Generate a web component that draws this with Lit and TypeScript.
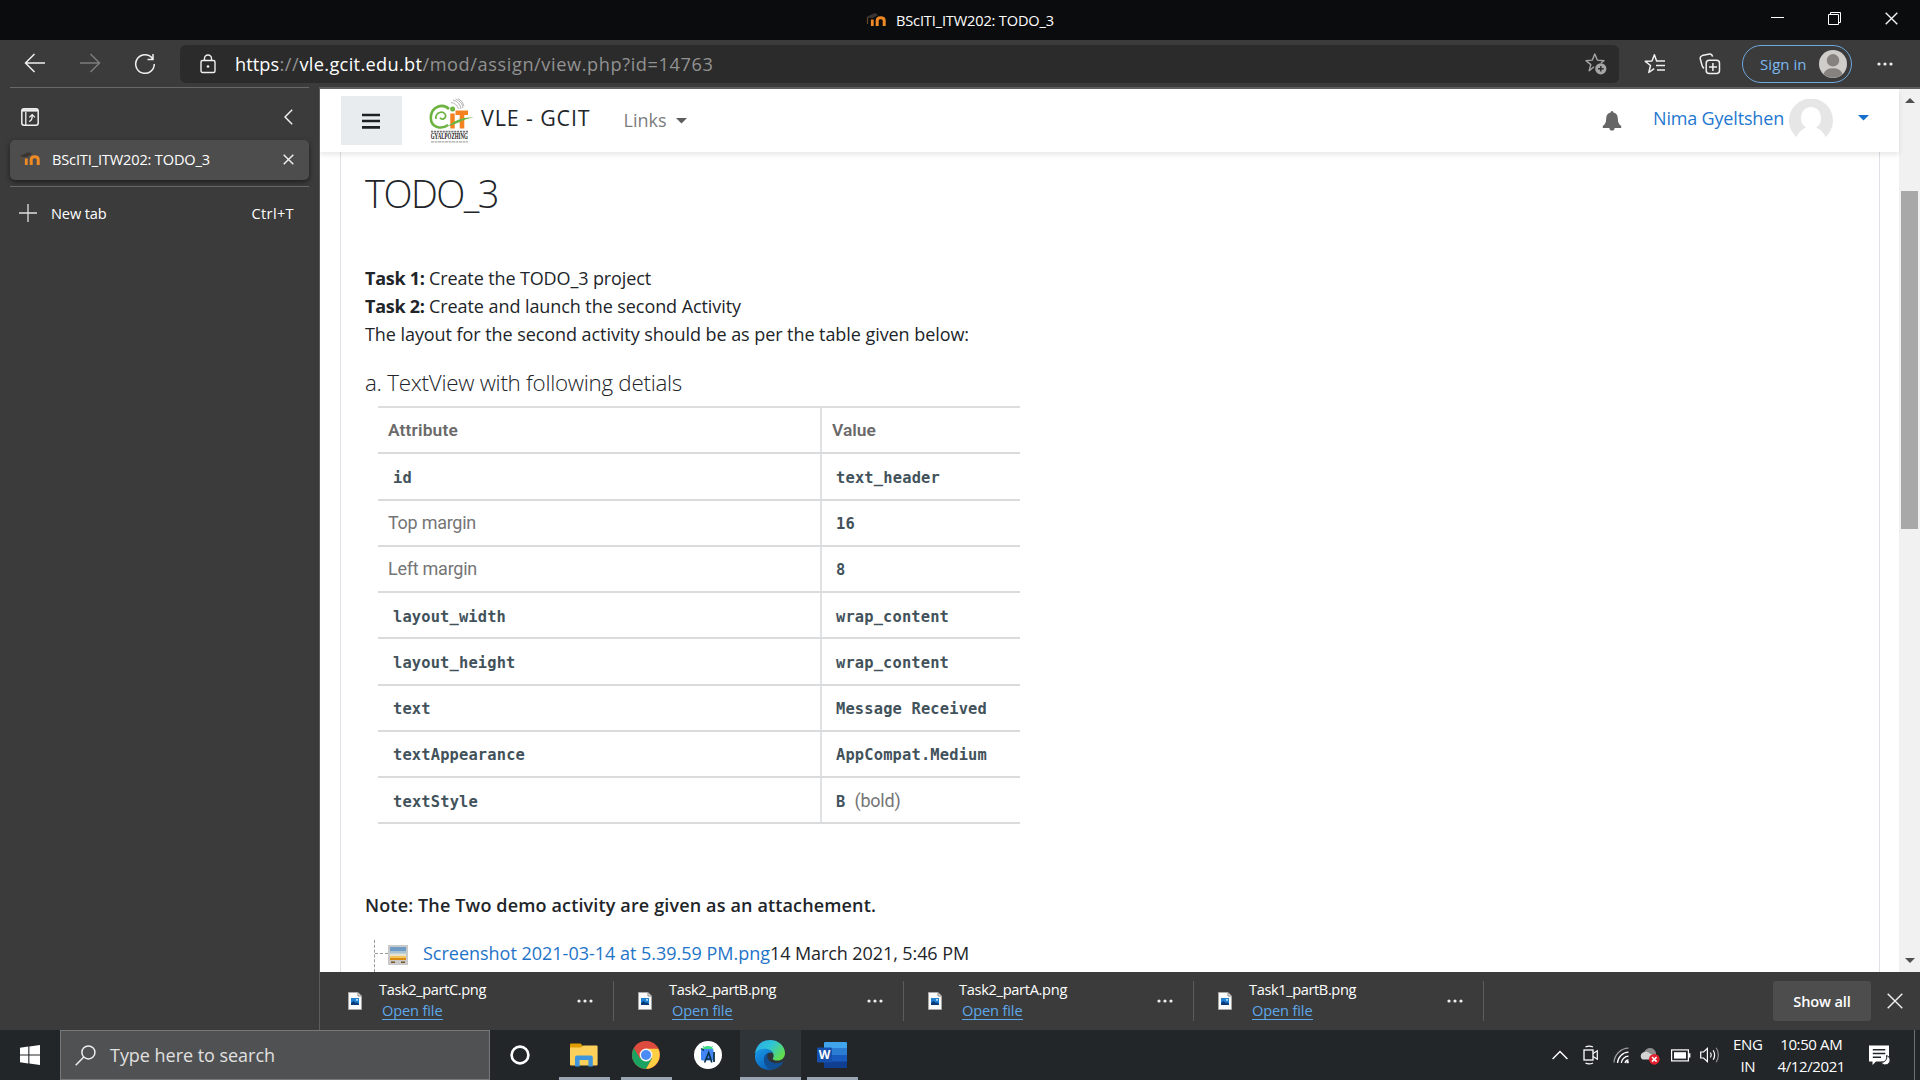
import { LitElement, html, css, svg } from "lit";
import { customElement, property } from "lit/decorators.js";

/** Single-line label whose tracking is adjusted so that it fills a set width. */
@customElement("fit-text")
class FitText extends LitElement {
  @property({ type: Number }) w = 0;
  static styles = css`
    :host { display: inline-block; white-space: pre; }
  `;
  updated() {
    this.style.letterSpacing = "0px";
    const n = (this.textContent || "").length;
    const natural = this.getBoundingClientRect().width;
    if (n && this.w) this.style.letterSpacing = `${(this.w - natural) / n}px`;
  }
  render() {
    return html`<slot></slot>`;
  }
}

const fit = (text: string, w: number, cls = "") =>
  html`<fit-text class=${cls} w=${w}>${text}</fit-text>`;

const icon = (w: number, h: number, body: unknown, cls = "") =>
  html`<svg class="ic ${cls}" width=${w} height=${h} viewBox="0 0 ${w} ${h}" fill="none">${body}</svg>`;

const moodle = icon(20, 16, svg`
  <path d="M0 5 L9 1 L12 3 L7 6 L2 6 Z" fill="#3a3532"/><path d="M1.5 6V12" stroke="#6b4a2c" stroke-width="1.2"/>
  <path d="M6.3 14V7.5" stroke="#f08a24" stroke-width="2.8"/>
  <path d="M11.2 14V8.6C11.2 4.8 18.2 4.8 18.2 8.6V14" stroke="#f08a24" stroke-width="3"/>`);

const dots = icon(18, 6, svg`<circle cx="3" cy="3" r="1.6" fill="#eee"/><circle cx="9" cy="3" r="1.6" fill="#eee"/><circle cx="15" cy="3" r="1.6" fill="#eee"/>`);

const cross = (s: number) => icon(s, s, svg`<path d="M.7 .7L${s - 0.7} ${s - 0.7}M${s - 0.7} .7L.7 ${s - 0.7}" stroke="#f2f2f2" stroke-width="1.4"/>`);

const rows: Array<[string, string, string, number, number]> = [
  ["mono", "id", "text_header", 19, 104],
  ["", "Top margin", "16", 88, 19],
  ["", "Left margin", "8", 89, 9.5],
  ["mono", "layout_width", "wrap_content", 113, 113],
  ["mono", "layout_height", "wrap_content", 122.5, 113],
  ["mono", "text", "Message Received", 37.7, 151],
  ["mono", "textAppearance", "AppCompat.Medium", 132, 151],
  ["mono", "textStyle", "B", 85, 9.5],
];

const files: Array<[string, number]> = [
  ["Task2_partC.png", 107],
  ["Task2_partB.png", 107],
  ["Task2_partA.png", 108],
  ["Task1_partB.png", 107],
];

@customElement("app-root")
class AppRoot extends LitElement {
  static styles = css`
    :host { display: block; width: 1920px; height: 1080px; overflow: hidden;
      font-family: "Open Sans", "Noto Sans", sans-serif; font-size: 14.6px; color: #fff; background: #3b3b3b; }
    * { box-sizing: border-box; }
    svg { display: block; flex: none; }
    .grow { flex: 1; }
    .title { height: 40px; background: #0b0c0e; display: flex; align-items: center; padding: 0 22px 4px 866px; }
    .title .ic { margin-top: 4px; }
    .title fit-text { margin: 3px 0 0 10px; }
    .title .win { display: flex; gap: 44px; align-items: center; margin-left: auto; }
    .title .win .ic { margin-top: 0; }
    .tools { height: 47px; display: flex; align-items: center; padding: 0 26px 0 24px; }
    .tools .nav { display: flex; gap: 33px; width: 156px; }
    .addr { width: 1440px; height: 38px; background: #2b2b2b; border-radius: 6px; display: flex; align-items: center; padding: 0 11px 0 20px; }
    .url { font-size: 18.2px; margin-left: 19px; display: flex; color: #929292; }
    .url b { font-weight: 400; color: #fff; }
    .fav { margin-left: 25px; }
    .coll { margin-left: 33px; }
    .pill { width: 110px; height: 38px; margin-left: 21px; border: 1.5px solid #6fa9dd; border-radius: 20px; display: flex; align-items: center; justify-content: space-between; padding: 0 4px 0 17px; color: #7cb8f0; font-size: 15px; }
    .tools > .more { margin-left: 24px; }
    .mid { display: flex; height: 943px; }
    .side { width: 320px; border-right: 1px solid #5c5c5c; padding: 0 10px; }
    .side .top { border-top: 1px solid #686868; height: 53px; display: flex; justify-content: space-between; align-items: center; padding: 6px 16px 0 11px; }
    .tab { height: 40px; background: #4d4d4d; border-radius: 5px; box-shadow: 0 2px 5px rgba(0,0,0,.5); display: flex; align-items: center; padding: 0 15px 2px 10px; }
    .tab fit-text { margin: 0 auto 0 12px; }
    .new { border-top: 1px solid #686868; margin-top: 6px; height: 52px; display: flex; align-items: center; padding: 0 15px 0 9px; }
    .new .n { margin: 0 auto 0 14px; }
    .main { width: 1600px; display: flex; flex-direction: column; }
    .view { height: 885px; background: #fff; border-top: 2px solid #5e5e5e; display: flex; color: #212529; overflow: hidden; }
    .page { width: 1579px; font-size: 18px; display: flex; flex-direction: column; }
    .head { height: 63px; flex: none; box-shadow: 0 3px 5px rgba(0,0,0,.09); display: flex; align-items: center; padding: 0 30px 0 21px; position: relative; }
    .burger { width: 61px; height: 49px; background: #e9ecef; display: flex; align-items: center; justify-content: center; padding-right: 1px; }
    .logo { margin: -2px 0 0 27px; overflow: visible; }
    .brand { font-size: 21.4px; margin: -6px 0 0 7px; }
    .links { color: #7c7c7c; margin: -1px 9px 0 33px; }
    .user { color: #1f78cf; margin: -6px 5px 0 31px; }
    .head .c2 { margin: -6px 0 0 25px; }
    .card { margin: 0 20px 0 20px; width: 1540px; flex: 1; border-left: 1px solid #dee2e6; border-right: 1px solid #dee2e6; padding: 15px 0 0 24px; }
    .h1 { font-size: 38px; font-weight: 300; height: 52px; line-height: 52px; }
    .tasks { margin-top: 45px; height: 84px; line-height: 28px; }
    .tasks > div, .note, .h1, .h2 { display: flex; }
    .h2 { font-size: 22.4px; font-weight: 300; line-height: 32px; margin-top: 19px; height: 35px; }
    .tb { margin: 4px 0 0 13px; width: 642px; border-top: 2px solid #dcdddf; font-family: Roboto, sans-serif; font-size: 18px; color: #757575; }
    .row { height: 46.25px; border-bottom: 2px solid #d9dbdc; display: flex; }
    .a { width: 444px; border-right: 2px solid #e0e1e3; padding-left: 10px; display: flex; align-items: center; }
    .v { padding-left: 14px; display: flex; align-items: center; }
    .th .v { padding-left: 10px; }
    .th { font-weight: 600; color: #6a6a6a; font-size: 17.4px; }
    .mono { font-family: "DejaVu Sans Mono", monospace; font-weight: 700; font-size: 15.4px; color: #42525b; padding-top: 3px; }
    .a .mono { margin-left: 5px; }
    .bold { margin-left: 9px; }
    .note { font-weight: 600; margin-top: 67px; line-height: 28px; height: 49px; }
    .tree { display: flex; margin-left: 9px; height: 32px; border-left: 1px dashed #999; line-height: 26px; }
    .tree .br { width: 13px; height: 14px; border-bottom: 1px dashed #999; }
    .tree .ic { margin-top: 5px; }
    .tree .lk { color: #1f74c7; margin-left: 15px; }
    .bar { width: 21px; background: #f1f1f1; display: flex; flex-direction: column; align-items: center; padding: 9px 0 9px; }
    .thumb { width: 17px; height: 338px; background: #a8a8a8; margin-top: 88px; margin-bottom: auto; }
    .dl { height: 58px; display: flex; align-items: center; padding-right: 17px; }
    .file { width: 290px; height: 40px; border-right: 1px solid #5c5c5c; display: flex; align-items: center; padding: 0 19px 0 24px; }
    .dl .file:first-child { width: 294px; padding-left: 28px; }
    .file .names { display: flex; flex-direction: column; margin: -5px auto 0 17px; align-items: flex-start; line-height: 24px; }
    .open { color: #5ea8ea; margin-left: 3px; line-height: 18px; border-bottom: 1px solid #5ea8ea; }
    .all { width: 98px; height: 40px; background: #4d4d4d; border-radius: 3px; display: flex; align-items: center; justify-content: center; font-weight: 600; margin: 0 16px 0 auto; padding-bottom: 1px; }
    .task { height: 50px; background: #222629; display: flex; align-items: center; }
    .start { width: 60px; display: flex; justify-content: center; }
    .search { width: 430px; height: 50px; border: 1px solid #777879; background: #505152; display: flex; align-items: center; padding-left: 14px; font-size: 18px; color: #e0e0e0; }
    .search fit-text { margin-left: 14px; padding-bottom: 1px; }
    .app { width: 51px; height: 50px; margin-left: 11px; display: flex; justify-content: center; align-items: center; border-bottom: 3px solid #99a5b3; padding: 3px 2px 0 0; }
    .app.off { border-color: transparent; }
    .app.on { width: 61px; background: #2f3438; margin-left: 6px; }
    .app.on + .app { margin-left: 6px; }
    .tray { margin-left: auto; display: flex; align-items: center; font-size: 15px; padding-right: 5px; }
    .col { display: flex; flex-direction: column; align-items: center; line-height: 22px; padding-bottom: 1px; }
    .peek { width: 1px; height: 50px; background: #6d7073; margin-left: 24px; }
  `;

  render() {
    return html`
      <div class="title">
        ${moodle} ${fit("BScITI_ITW202: TODO_3", 158)}
        <div class="win">
          ${icon(13, 13, svg`<path d="M0 5.5H13" stroke="#fff"/>`)}
          ${icon(13, 13, svg`<path d="M.5 2.5H10.5V12.5H.5ZM2.5 2.5V.5H12.5V10.5H10.5" stroke="#fff"/>`)}
          ${cross(13)}
        </div>
      </div>

      <div class="tools">
        <div class="nav">
          ${icon(22, 20, svg`<path d="M21 10H2M10.5 1L1.5 10L10.5 19" stroke="#f0f0f0" stroke-width="1.5"/>`)}
          ${icon(22, 20, svg`<path d="M1 10H20M11.5 1L20.5 10L11.5 19" stroke="#7c7c7c" stroke-width="1.5"/>`)}
          ${icon(22, 22, svg`<path d="M18.5 5.5A9.3 9.3 0 1 0 20.3 11M19 1V6.5H13.5" stroke="#f0f0f0" stroke-width="1.5"/>`)}
        </div>
        <div class="addr">
          ${icon(16, 20, svg`<rect x="1" y="6.5" width="14" height="12" rx="1.5" stroke="#f0f0f0" stroke-width="1.4"/><path d="M4.5 6.5V4.5A3.5 3.5 0 0 1 11.5 4.5V6.5" stroke="#f0f0f0" stroke-width="1.4"/><circle cx="8" cy="12.5" r="1.3" fill="#f0f0f0"/>`)}
          <div class="url"><b>${fit("https", 44.5)}</b>${fit("://", 20)}<b>${fit("vle.gcit.edu.bt", 123)}</b>${fit("/mod/assign/view.php?id=14763", 291)}</div>
          <span class="grow"></span>
          ${icon(24, 24, svg`<path d="M10 14.8L5.2 18.7L6.8 12.6L2 8.6L8.3 8.1L10.8 2L13.3 8.1L20 8.7L17 11" stroke="#a5a5a5" stroke-width="1.4" stroke-linejoin="round"/><circle cx="16.8" cy="16.8" r="5.6" fill="#a5a5a5"/><path d="M16.8 14V19.6M14 16.8H19.6" stroke="#2b2b2b" stroke-width="1.4"/>`)}
        </div>
        ${icon(22, 22, svg`<path d="M13.5 8H12.6L10.4 1.8L8 8L1.3 8.3L6.5 12.5L4.8 19.5L10.2 15.6M12 8H21M12 12.6H21M13 17H21" stroke="#f0f0f0" stroke-width="1.5" stroke-linejoin="round"/>`, "fav")}
        ${icon(22, 22, svg`<rect x="7.2" y="7.2" width="13.3" height="13.3" rx="3" stroke="#f0f0f0" stroke-width="1.5"/><path d="M13.9 10V18M10 13.9H18M4.8 15.5L3.2 13L1.2 5.5Q1 3.3 3.2 2.6L10.5 1Q12.8 .8 13.6 3.6" stroke="#f0f0f0" stroke-width="1.5"/>`, "coll")}
        <div class="pill">
          ${fit("Sign in", 46.5)}
          ${icon(28, 28, svg`<circle cx="14" cy="14" r="14" fill="#cfcdca"/><circle cx="14" cy="10.3" r="6.2" fill="#85827f"/><path d="M4.5 24A9.8 7.5 0 0 1 23.5 24A14 14 0 0 1 4.5 24Z" fill="#85827f"/>`)}
        </div>
        <span class="more">${dots}</span>
      </div>

      <div class="mid">
        <div class="side">
          <div class="top">
            ${icon(18, 18, svg`<rect x=".8" y=".8" width="16.4" height="16.4" rx="2.2" stroke="#f0f0f0" stroke-width="1.5"/><path d="M1 2.4H17" stroke="#f0f0f0" stroke-width="2.4"/><path d="M4.8 4V17" stroke="#f0f0f0" stroke-width="1.3"/><path d="M8 13.5Q11.5 12.5 11.2 7M8.3 9.4L11.2 6.6L14 9.4" stroke="#f0f0f0" stroke-width="1.3"/>`)}
            ${icon(9, 16, svg`<path d="M8.2 .7L1 8L8.2 15.3" stroke="#f0f0f0" stroke-width="1.5"/>`)}
          </div>
          <div class="tab">${moodle} ${fit("BScITI_ITW202: TODO_3", 158)} ${cross(11)}</div>
          <div class="new">
            ${icon(18, 18, svg`<path d="M9 0V18M0 9H18" stroke="#e0e0e0" stroke-width="1.3"/>`)}
            ${fit("New tab", 55.5, "n")} ${fit("Ctrl+T", 42.5)}
          </div>
        </div>

        <div class="main">
          <div class="view">
            <div class="page">
              <div class="head">
                <div class="burger">${icon(18, 16, svg`<path d="M0 2H18M0 8H18M0 14.4H18" stroke="#1d2125" stroke-width="2.6"/>`)}</div>
                ${this.logo()}
                ${fit("VLE - GCIT", 109.5, "brand")}
                ${fit("Links", 43, "links")}
                ${icon(11, 6, svg`<path d="M0 0H11L5.5 5.6Z" fill="#5d5d5d"/>`)}
                <span class="grow"></span>
                ${icon(20, 22, svg`<path d="M10 1A1.5 1.5 0 0 1 11.4 2.6Q15.8 3.8 15.8 8.5Q15.8 14 19.2 16V18H12.6A2.6 2.6 0 0 1 7.4 18H.8V16Q4.2 14 4.2 8.5Q4.2 3.8 8.6 2.6A1.5 1.5 0 0 1 10 1Z" fill="#666"/>`)}
                ${fit("Nima Gyeltshen", 131, "user")}
                ${icon(44, 44, svg`<path d="M7.5 38A22 22 0 1 1 36.5 38Q34 31.5 27 28.5A10.5 10.5 0 0 0 31.8 18C31.8 4.5 12.2 4.5 12.2 18A10.5 10.5 0 0 0 17 28.5Q10 31.5 7.5 38Z" fill="#e6e6e6"/>`)}
                ${icon(11, 6, svg`<path d="M0 0H11L5.5 5.6Z" fill="#1670c9"/>`, "c2")}
              </div>
              <div class="card">
                <div class="h1">${fit("TODO_3", 133)}</div>
                <div class="tasks">
                  <div><b>${fit("Task 1: ", 64)}</b>${fit("Create the TODO_3 project", 222)}</div>
                  <div><b>${fit("Task 2: ", 64)}</b>${fit("Create and launch the second Activity", 312)}</div>
                  <div>${fit("The layout for the second activity should be as per the table given below:", 604)}</div>
                </div>
                <div class="h2">${fit("a. TextView with following detials", 317)}</div>
                <div class="tb">
                  <div class="row th"><div class="a">${fit("Attribute", 70)}</div><div class="v">${fit("Value", 44)}</div></div>
                  ${rows.map(([cls, a, v, aw, vw]) => html`
                    <div class="row">
                      <div class="a">${fit(a, aw, cls)}</div>
                      <div class="v">${fit(v, vw, "mono")}${v === "B" ? fit("(bold)", 46, "bold") : ""}</div>
                    </div>`)}
                </div>
                <div class="note">${fit("Note: The Two demo activity are given as an attachement.", 511)}</div>
                <div class="tree">
                  <div class="br"></div>
                  ${icon(20, 20, svg`<rect width="20" height="20" fill="#c9c9c9"/><rect x="2" y="2" width="16" height="5" fill="#6f9cc4"/><rect x="2" y="6" width="16" height="3" fill="#a9c3d6"/><rect x="2" y="8.5" width="16" height="3" fill="#e6e2d0"/><rect x="2" y="11" width="16" height="3" fill="#f3c55a"/><rect x="2" y="13" width="16" height="2" fill="#d98a10"/><path d="M3 17.3H7M13 17.3H17" stroke="#7a5a20" stroke-width="1.6"/>`)}
                  ${fit("Screenshot 2021-03-14 at 5.39.59 PM.png", 347, "lk")}${fit("14 March 2021, 5:46 PM", 199)}
                </div>
              </div>
            </div>
            <div class="bar">
              ${icon(10, 5, svg`<path d="M0 5L5 0L10 5Z" fill="#505050"/>`)}
              <div class="thumb"></div>
              ${icon(10, 5, svg`<path d="M0 0L5 5L10 0Z" fill="#505050"/>`)}
            </div>
          </div>
          <div class="dl">
            ${files.map(([f, w]) => html`
              <div class="file">
                ${icon(14, 18, svg`<path d="M.5 .5H10L13.5 4V17.5H.5Z" fill="#fafafa" stroke="#a8a8a8"/><path d="M10 .5V4H13.5" stroke="#888"/><rect x="3" y="6" width="8" height="7" fill="#1f80d2"/><path d="M3 13V11L5.5 9L8 11L9 10.2L11 12V13Z" fill="#0b3a78"/><circle cx="9" cy="7.8" r=".9" fill="#fff"/>`)}
                <div class="names">${fit(f, w)}${fit("Open file", 60.5, "open")}</div>
                ${dots}
              </div>`)}
            <div class="all">${fit("Show all", 57.5)}</div>
            ${cross(16)}
          </div>
        </div>
      </div>

      <div class="task">
        <div class="start">${icon(20, 20, svg`<path d="M0 2.8L8.3 1.6V9.4H0ZM9.4 1.4L20 0V9.4H9.4ZM0 10.5H8.3V18.4L0 17.2ZM9.4 10.5H20V20L9.4 18.6Z" fill="#fff"/>`)}</div>
        <div class="search">
          ${icon(21, 21, svg`<circle cx="13.4" cy="7.4" r="6.5" stroke="#eee" stroke-width="1.5"/><path d="M8.8 12L.7 20.2" stroke="#eee" stroke-width="1.5"/>`)}
          ${fit("Type here to search", 165)}
        </div>
        ${this.apps()}
        ${this.tray()}
      </div>`;
  }

  logo() {
    return html`<svg class="logo" width="45" height="46" viewBox="0 0 45 46" fill="none">
      <path d="M24 3Q31 5 32 12M26.5 2Q33.5 5 34 11M22 5.5Q27.5 6 29.5 12M29 1.5Q34 4 35 9" stroke="#b5b5b5" stroke-width="1"/>
      <path d="M20 12C14 6 2 9 1.8 21C2 31 13 32.5 19 28" stroke="#6cb33f" stroke-width="2.6"/>
      <path d="M7 22C6 15 15 13 16.5 18C17.5 22 12 23.5 11.2 20.5" stroke="#6cb33f" stroke-width="1.7"/>
      <path d="M23.5 16.5V31.5" stroke="#f58220" stroke-width="4.4"/>
      <circle cx="23.6" cy="12" r="2.5" fill="#6cb33f"/>
      <path d="M26.5 15.8H39M33 15.8V31.5" stroke="#f58220" stroke-width="4.6"/>
      <path d="M18 29C25 26 28 20 45 20.5C33 22 28 28 18 29Z" fill="#6cb33f"/>
      <path d="M2 34.6H39" stroke="#777" stroke-width="1.8" stroke-dasharray="2.2 .7"/>
      <text x="1.8" y="42.4" font-family="Liberation Serif, serif" font-weight="700" font-size="7.4" fill="#222" textLength="37" lengthAdjust="spacingAndGlyphs">GYALPOZHING</text>
      <path d="M2 44.9H39" stroke="#aaa" stroke-width="1.3" stroke-dasharray="3 .5"/>
    </svg>`;
  }

  apps() {
    return html`
      <div class="app off" style="margin-left:5px">${icon(20, 20, svg`<circle cx="10" cy="10" r="8.4" stroke="#fff" stroke-width="2.6"/>`)}</div>
      <div class="app" style="margin-left:13px">${icon(28, 24, svg`<path d="M0 1.5Q0 .5 1 .5H10.5L13.5 3.5V6H0Z" fill="#e09c00"/><path d="M0 4.5H11L13.5 2.5H26.5Q27.6 2.5 27.6 3.6V21.5Q27.6 22.5 26.5 22.5H1Q0 22.5 0 21.5Z" fill="#fdd05c"/><path d="M5 23.5V14.6Q5 12.5 7 12.5H20.8Q22.8 12.5 22.8 14.6V23.5H18.4V17H9.6V23.5Z" fill="#3f96dc"/>`)}</div>
      <div class="app">${icon(28, 28, svg`<circle cx="14" cy="14" r="14" fill="#dd4b3e"/><path d="M14 14L1.9 7A14 14 0 0 0 14 28L20 17.5Z" fill="#1aa260"/><path d="M14 28A14 14 0 0 0 26.1 7.5H14L20 17.5Z" fill="#ffce43"/><path d="M1.9 7A14 14 0 0 1 26.1 7.5H14L8 17.5Z" fill="#dd4b3e"/><circle cx="14" cy="14" r="6.4" fill="#f4f4f4"/><circle cx="14" cy="14" r="5" fill="#4c8bf5"/>`)}</div>
      <div class="app off">${icon(28, 28, svg`<circle cx="14" cy="14" r="14" fill="#fff"/><path d="M8 8.5A6 5 0 0 1 19.5 8.5Z" fill="#3ddc84"/><path d="M9 5L10.5 7M18.5 5L17 7" stroke="#3ddc84"/><rect x="7" y="8" width="12.5" height="11.5" rx="1.5" fill="#4285f4"/><path d="M10.6 21.5L14.7 11.5L17.8 21.5M12 18H17" stroke="#073042" stroke-width="1.6"/><path d="M20 11V21" stroke="#073042" stroke-width="1.8"/><path d="M7 7.5L10 9.5" stroke="#073042" stroke-width="1.4"/>`)}</div>
      <div class="app on">${icon(30, 30, svg`
        <defs>
          <linearGradient id="e1" x1="0" y1="0" x2="1" y2=".6"><stop offset="0" stop-color="#2aa6e8"/><stop offset=".5" stop-color="#2fc4d8"/><stop offset="1" stop-color="#62dd4e"/></linearGradient>
          <linearGradient id="e2" x1="0" y1="0" x2=".6" y2="1"><stop offset="0" stop-color="#1a9be8"/><stop offset="1" stop-color="#0a63bd"/></linearGradient>
        </defs>
        <path d="M0 14C1 5 7 0 15 0C24 0 30 6.5 30 13C30 18 26.5 20.5 22.5 20.5C19.5 20.5 17.5 19.5 17.8 18.5C19.5 16.5 19 11.5 13.5 9.8C8 8.5 2 10 0 14Z" fill="url(#e1)"/>
        <path d="M0 15C.5 11 5 8.8 9.5 8.8C14.5 8.8 17.5 11.5 18.2 13.5C15 10.8 8.8 14 9.3 20.5C9.6 25 13 29 17 29.8C7 31 -1 24 0 15Z" fill="url(#e2)"/>
        <path d="M14.5 12.5C10 13.5 8.6 17 9.2 21C10 26 14 30 18 29.6C22 28.8 26 26 27.8 22.8C28.2 22 27.6 21.6 27 22C20 25 12.5 22 12.3 16.5C12.2 14.8 13.2 13.2 14.5 12.5Z" fill="#104f94"/>`)}</div>
      <div class="app">${icon(30, 26, svg`<rect x="7" y="0" width="23" height="26" rx="1.4" fill="#185abd"/><path d="M7 6.5V1.4Q7 0 8.4 0H28.6Q30 0 30 1.4V6.5Z" fill="#41a5ee"/><rect x="7" y="6.5" width="23" height="6.5" fill="#2b7cd3"/><path d="M7 19.5H30V24.6Q30 26 28.6 26H8.4Q7 26 7 24.6Z" fill="#103f91"/><rect x="0" y="5.5" width="15" height="15" rx="1.2" fill="#1650ad"/><text x="7.5" y="17.4" text-anchor="middle" font-family="Open Sans" font-weight="700" font-size="12" fill="#fff">W</text>`)}</div>`;
  }

  tray() {
    return html`<div class="tray">
      ${icon(16, 10, svg`<path d="M.6 9L8 1.4L15.4 9" stroke="#fff" stroke-width="1.4"/>`)}
      <span style="width:15px"></span>
      ${icon(16, 20, svg`<rect x="1" y="5" width="9" height="10" stroke="#fff" stroke-width="1.3"/><path d="M10 8.5L14.3 5.8V14.2L10 11.5M2.5 2Q6 .2 10 2M2.5 18Q6 19.8 10 18" stroke="#fff" stroke-width="1.2"/>`)}
      <span style="width:14px"></span>
      ${icon(17, 17, svg`<path d="M1 15.5A15 15 0 0 1 15.5 1.2" stroke="#9a9c9e" stroke-width="1.3"/><path d="M4.5 16A11.5 11.5 0 0 1 15.5 5.2M8.3 16A7.5 7.5 0 0 1 15.5 9.2M12 16A4 4 0 0 1 15.5 12.8" stroke="#fff" stroke-width="1.3"/><rect x="13.5" y="14" width="2.2" height="2.2" fill="#fff"/>`)}
      <span style="width:9px"></span>
      ${icon(22, 20, svg`<path d="M5 13A4 4 0 0 1 5.5 6.5A6 6 0 0 1 15.5 5Q18 7 16.5 13Z" fill="#8c8c8c"/><path d="M3.5 14.5A4 4 0 0 1 4 7.5Q8 5.5 11 8.5L16 11V14.5Z" fill="#d4d4d4"/><circle cx="15.3" cy="14.3" r="5.4" fill="#e0202c"/><path d="M13 12L17.6 16.6M17.6 12L13 16.6" stroke="#fff" stroke-width="1.6"/>`)}
      <span style="width:10px"></span>
      ${icon(20, 13, svg`<rect x=".6" y=".9" width="16.8" height="11" stroke="#fff" stroke-width="1.2"/><rect x="3" y="3.2" width="12" height="6.4" fill="#fff"/><path d="M18.6 4.2V8.6" stroke="#fff" stroke-width="1.6"/>`)}
      <span style="width:9px"></span>
      ${icon(21, 18, svg`<path d="M.7 6H3.6L7.4 2.3V15.7L3.6 12H.7Z" stroke="#fff" stroke-width="1.2"/><path d="M10.5 6.5Q12 9 10.5 11.5M13.2 4.2Q16 9 13.2 13.8" stroke="#fff" stroke-width="1.2"/><path d="M16.2 1.8Q20.6 9 16.2 16.2" stroke="#8d8f91" stroke-width="1.2"/>`)}
      <span style="width:12px"></span>
      <div class="col">${fit("ENG", 29.5)}${fit("IN", 14.5)}</div>
      <span style="width:15px"></span>
      <div class="col">${fit("10:50 AM", 62)}${fit("4/12/2021", 67.5)}</div>
      <span style="width:24px"></span>
      ${icon(21, 21, svg`<path d="M0 .5H20V16.5H7L3.5 20V16.5H0Z" fill="#fff"/><path d="M3.8 4.7H16.3M3.8 8.5H16.3M3.8 12.3H12" stroke="#222629" stroke-width="1.4"/><path d="M17.5 10.5A5 5 0 0 1 12 17.2A4.8 4.8 0 1 0 17.5 10.5Z" fill="#fff" stroke="#222629" stroke-width="1"/>`)}
      <div class="peek"></div>
    </div>`;
  }
}
